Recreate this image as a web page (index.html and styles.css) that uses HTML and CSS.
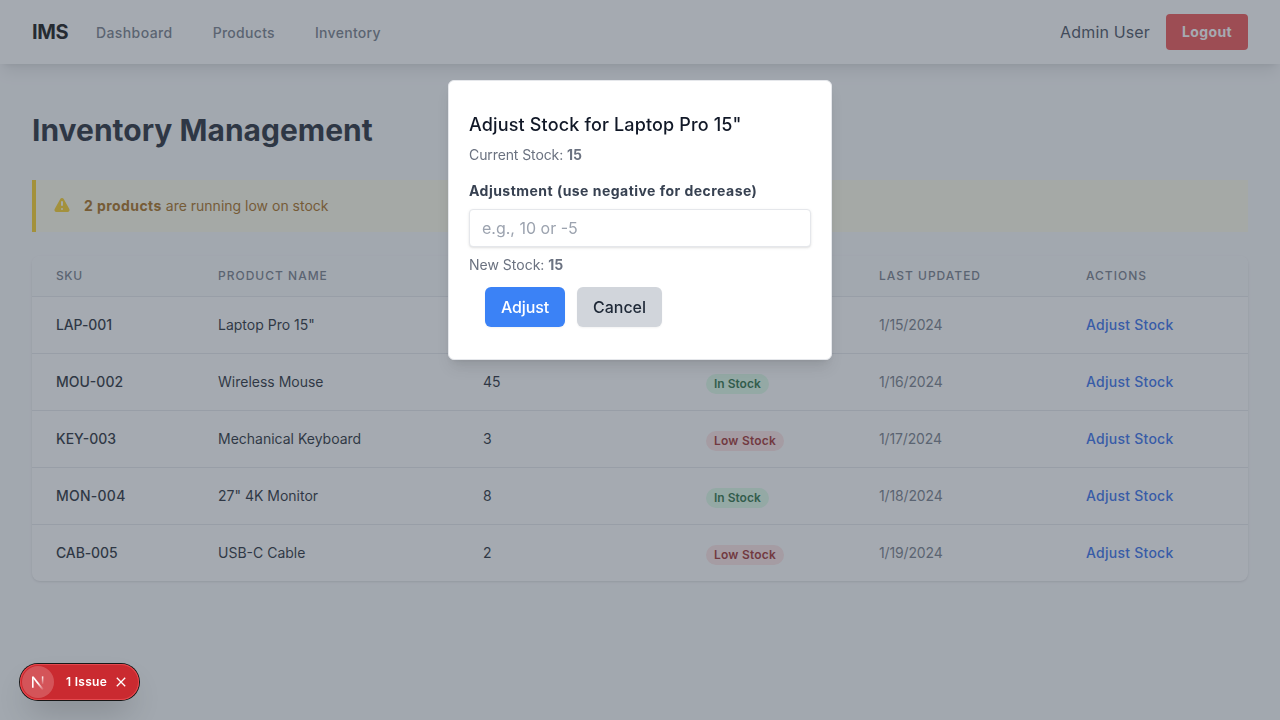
FILE: index.html
```html
<!DOCTYPE html>
<html lang="en">
<head>
<meta charset="utf-8">
<title>Inventory Management</title>
<link rel="stylesheet" href="styles.css">
</head>
<body>
<nav class="nav">
  <span class="brand">IMS</span>
  <a class="nav-link wide">Dashboard</a>
  <a class="nav-link">Products</a>
  <a class="nav-link">Inventory</a>
  <span class="user">Admin User</span>
  <button class="logout">Logout</button>
</nav>
<main class="main">
  <h1 class="title">Inventory Management</h1>
  <div class="alert">
    <svg class="alert-icon" viewBox="0 0 20 20" fill="currentColor"><path fill-rule="evenodd" d="M8.257 3.099c.765-1.36 2.722-1.36 3.486 0l5.58 9.92c.75 1.334-.213 2.98-1.742 2.98H4.42c-1.53 0-2.493-1.646-1.743-2.98l5.58-9.92zM11 13a1 1 0 11-2 0 1 1 0 012 0zm-1-8a1 1 0 00-1 1v3a1 1 0 002 0V6a1 1 0 00-1-1z" clip-rule="evenodd"/></svg>
    <p class="alert-text"><strong>2 products</strong> are running low on stock</p>
  </div>
  <div class="card">
    <table class="table">
      <colgroup><col class="c-sku"><col class="c-name"><col class="c-stock"><col class="c-status"><col class="c-date"><col class="c-act"></colgroup>
      <thead><tr><th class="tight">SKU</th><th>Product Name</th><th>Current Stock</th><th>Status</th><th>Last Updated</th><th>Actions</th></tr></thead>
      <tbody>
        <tr><td class="sku tight">LAP-001</td><td>Laptop Pro 15"</td><td>15</td><td class="status"><span class="badge ok">In Stock</span></td><td class="date">1/15/2024</td><td class="act">Adjust Stock</td></tr>
        <tr><td class="sku">MOU-002</td><td>Wireless Mouse</td><td>45</td><td class="status"><span class="badge ok">In Stock</span></td><td class="date">1/16/2024</td><td class="act">Adjust Stock</td></tr>
        <tr><td class="sku">KEY-003</td><td>Mechanical Keyboard</td><td>3</td><td class="status"><span class="badge low">Low Stock</span></td><td class="date">1/17/2024</td><td class="act">Adjust Stock</td></tr>
        <tr><td class="sku wide">MON-004</td><td>27" 4K Monitor</td><td>8</td><td class="status"><span class="badge ok">In Stock</span></td><td class="date">1/18/2024</td><td class="act">Adjust Stock</td></tr>
        <tr><td class="sku tight">CAB-005</td><td>USB-C Cable</td><td>2</td><td class="status"><span class="badge low">Low Stock</span></td><td class="date">1/19/2024</td><td class="act">Adjust Stock</td></tr>
      </tbody>
    </table>
  </div>
</main>
<div class="overlay">
  <div class="modal">
    <h3 class="modal-title">Adjust Stock for Laptop Pro 15"</h3>
    <p class="note current">Current Stock: <strong>15</strong></p>
    <label class="label" for="adj">Adjustment (use negative for decrease)</label>
    <input class="input" id="adj" type="text" placeholder="e.g., 10 or -5">
    <p class="note">New Stock: <strong>15</strong></p>
    <div class="buttons">
      <button class="btn primary">Adjust</button>
      <button class="btn secondary">Cancel</button>
    </div>
  </div>
</div>
<div class="issue">
  <span class="issue-mark">
    <svg width="20" height="20" viewBox="0 0 20 20" fill="none">
      <defs>
        <linearGradient id="diag" gradientUnits="userSpaceOnUse" x1="10.5" y1="10.5" x2="16" y2="17.5"><stop stop-color="#fff"/><stop offset="1" stop-color="#fff" stop-opacity="0"/></linearGradient>
        <linearGradient id="stem" gradientUnits="userSpaceOnUse" x1="14" y1="4" x2="14" y2="13"><stop stop-color="#fff"/><stop offset="1" stop-color="#fff" stop-opacity="0"/></linearGradient>
      </defs>
      <path d="M5 5L15 17.6" stroke="url(#diag)" stroke-width="1.7"/>
      <path d="M4.8 15.8V4.4" stroke="#fff" stroke-width="1.6"/>
      <path d="M14.6 4.4V12" stroke="url(#stem)" stroke-width="1.5"/>
    </svg>
  </span>
  <span class="issue-text">1 Issue</span>
  <svg class="issue-close" width="10" height="10" viewBox="0 0 10 10" fill="none" stroke="#fff" stroke-width="1.3"><path d="M.8.8l8.4 8.4M9.2.8L.8 9.2"/></svg>
</div>
</body>
</html>
```

FILE: styles.css
```css
* { box-sizing: border-box; margin: 0; padding: 0; }
body { font-family: Inter, sans-serif; font-size: 16px; line-height: 24px; background: #f9fafb; color: #111827; height: 720px; overflow: hidden; }
button, input { font: inherit; border: 0; }
strong { font-weight: 700; }

.nav { position: relative; display: flex; align-items: center; height: 64px; padding: 0 32px; background: #fff; box-shadow: 0 10px 15px -3px rgba(0,0,0,.1), 0 4px 6px -4px rgba(0,0,0,.1); }
.brand { width: 36px; margin-right: 28px; font-size: 20px; line-height: 28px; font-weight: 700; letter-spacing: -.4px; color: #000; }
.nav-link { font-size: 14px; line-height: 20px; font-weight: 500; letter-spacing: .3px; color: #6b7280; margin-right: 40px; padding-top: 1px; }
.nav-link.wide { letter-spacing: .4px; }
.user { margin-left: auto; margin-right: 16px; letter-spacing: .15px; color: #374151; }
.logout { width: 82px; height: 36px; border-radius: 4px; background: #ef4444; color: #fff; font-size: 14px; line-height: 20px; font-weight: 700; letter-spacing: .35px; }

.main { padding: 48px 32px 0; }
.title { font-size: 30px; line-height: 36px; font-weight: 700; color: #111827; }
.alert { display: flex; align-items: center; height: 52px; margin-top: 32px; padding-left: 16px; border-left: 4px solid #facc15; background: #fefce8; }
.alert-icon { width: 20px; height: 20px; color: #facc15; margin-right: 12px; }
.alert-text { font-size: 14px; line-height: 20px; color: #a16207; }
.alert-text strong { letter-spacing: .43px; }

.card { margin-top: 24px; border-radius: 8px; overflow: hidden; background: #fff; box-shadow: 0 1px 3px rgba(0,0,0,.1), 0 1px 2px -1px rgba(0,0,0,.1); }
.table { width: 100%; table-layout: fixed; border-collapse: separate; border-spacing: 0; }
.c-sku { width: 162px; }
.c-name { width: 265px; }
.c-stock { width: 223px; }
.c-status { width: 173px; }
.c-date { width: 207px; }
.c-act { width: 186px; }
th { height: 41px; padding: 0 24px; background: #f9fafb; border-bottom: 1px solid #e5e7eb; text-align: left; text-transform: uppercase; font-size: 12px; line-height: 16px; font-weight: 500; letter-spacing: 1px; color: #6b7280; }
th.tight { letter-spacing: .6px; }
td { height: 57px; padding: 0 24px; border-bottom: 1px solid #e5e7eb; font-size: 14px; line-height: 20px; color: #111827; }
tr:last-child td { height: 56px; border-bottom: 0; }
.sku { font-weight: 500; }
.sku.tight { letter-spacing: -.12px; }
.sku.wide { letter-spacing: .25px; }
.date { letter-spacing: -.15px; color: #6b7280; }
.act { font-weight: 500; letter-spacing: .25px; color: #2563eb; }
.status { padding-top: 2px; }
.badge { display: inline-flex; padding: 0 8px; border-radius: 10px; font-size: 12px; line-height: 20px; font-weight: 600; vertical-align: middle; }
.ok { background: #dcfce7; color: #166534; }
.low { background: #fee2e2; color: #991b1b; letter-spacing: .22px; }

.overlay { position: fixed; inset: 0; display: flex; justify-content: center; align-items: flex-start; padding-top: 80px; background: rgba(75,85,99,.5); }
.modal { width: 384px; padding: 32px 20px; border: 1px solid #e5e7eb; border-radius: 6px; background: #fff; box-shadow: 0 10px 15px -3px rgba(0,0,0,.1), 0 4px 6px -4px rgba(0,0,0,.1); }
.modal-title { font-size: 18px; line-height: 24px; font-weight: 500; letter-spacing: .15px; color: #111827; }
.note { margin-top: 8px; font-size: 14px; line-height: 20px; color: #6b7280; }
.note.current { letter-spacing: -.1px; }
.label { display: block; margin: 16px 0 8px; font-size: 14px; line-height: 20px; font-weight: 700; letter-spacing: .47px; color: #374151; }
.input { display: block; width: 100%; height: 38px; padding: 0 12px; border: 1px solid #e5e7eb; border-radius: 4px; box-shadow: 0 1px 3px rgba(0,0,0,.1), 0 1px 2px -1px rgba(0,0,0,.1); color: #374151; }
.input::placeholder { color: #9ca3af; }
.buttons { display: flex; gap: 12px; padding: 12px 16px 0; }
.btn { height: 40px; border-radius: 6px; font-weight: 500; box-shadow: 0 1px 2px rgba(0,0,0,.05); }
.primary { width: 80px; letter-spacing: -.1px; background: #3b82f6; color: #fff; }
.secondary { width: 85px; background: #d1d5db; color: #1f2937; }

.issue { position: fixed; left: 20px; bottom: 20px; display: flex; align-items: center; width: 119px; height: 36px; padding-left: 2px; border-radius: 18px; background: #ca2a30; box-shadow: 0 0 0 1px #171717, inset 0 0 0 1px #e5484d, 0 16px 32px -8px rgba(0,0,0,.24); }
.issue-mark { display: flex; align-items: center; justify-content: center; width: 32px; height: 32px; border-radius: 50%; background: rgba(255,255,255,.2); }
.issue-text { margin-left: 12px; font-size: 12px; line-height: 16px; font-weight: 600; letter-spacing: .3px; color: #fff; white-space: nowrap; }
.issue-close { margin-left: auto; margin-right: 13px; }
```
